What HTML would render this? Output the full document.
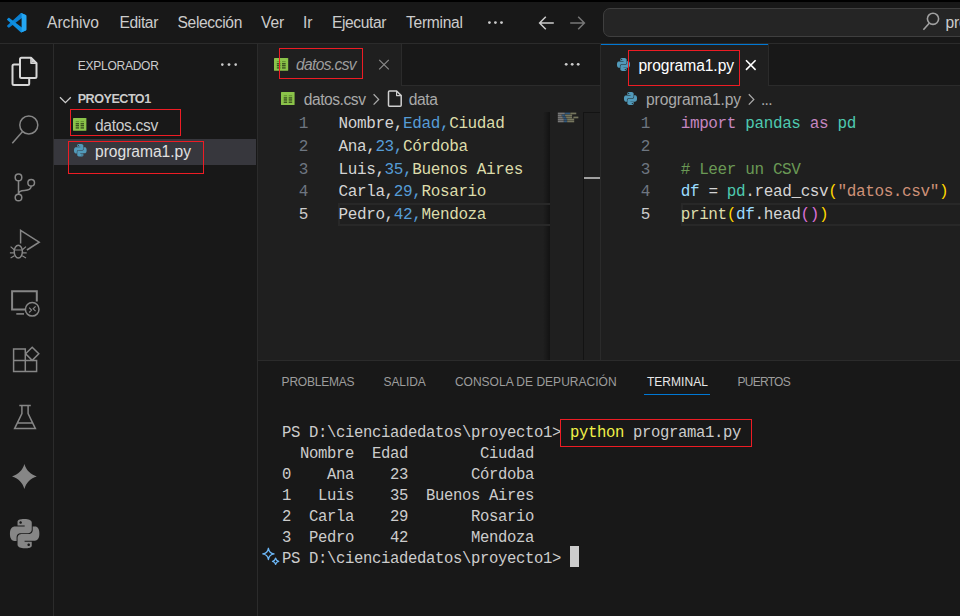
<!DOCTYPE html>
<html lang="es">
<head>
<meta charset="utf-8">
<title>programa1.py - proyecto1 - Visual Studio Code</title>
<style>
html,body{margin:0;padding:0;}
body{width:960px;height:616px;overflow:hidden;background:#181818;position:relative;font-family:"Liberation Sans",sans-serif;color:#ccc;}
.a{position:absolute;}
.t{position:absolute;white-space:pre;line-height:1;}
.m{position:absolute;white-space:pre;font-family:"Liberation Mono",monospace;}
.red{position:absolute;border:1px solid #ed1c24;box-sizing:border-box;}
svg{position:absolute;overflow:visible;}
.code{font-size:16px;letter-spacing:-0.38px;line-height:22.8px;color:#cccccc;}
.term{font-size:15.6px;letter-spacing:-0.36px;line-height:21.05px;color:#cccccc;}
.ln{color:#6e7681;text-align:right;}
.k{color:#c586c0}.c{color:#4ec9b0}.cm{color:#6a9955}.v{color:#9cdcfe}.f{color:#dcdcaa}.s{color:#ce9178}.y{color:#ffd700}.p{color:#da70d6}.n{color:#569cd6}.yy{color:#dcdcaa}.w{color:#d4d4d4}
</style>
</head>
<body>
<!-- top black strip -->
<div class="a" style="left:0;top:0;width:960px;height:2px;background:#000"></div>
<!-- title bar -->
<div class="a" style="left:0;top:2px;width:960px;height:41px;background:#181818;border-bottom:1px solid #2b2b2b"></div>
<!-- search box -->
<div class="a" style="left:603px;top:8px;width:380px;height:29px;box-sizing:border-box;background:#252525;border:1px solid #3f3f3f;border-radius:7px"></div>
<!-- activity bar -->
<div class="a" style="left:0;top:44px;width:53px;height:572px;background:#181818;border-right:1px solid #2b2b2b"></div>
<!-- side bar -->
<div class="a" style="left:54px;top:44px;width:203px;height:572px;background:#181818;border-right:1px solid #2b2b2b"></div>
<div class="a" style="left:54px;top:138.5px;width:202px;height:26.5px;background:#37373d"></div>
<!-- editor area -->
<div class="a" style="left:258px;top:44px;width:702px;height:316px;background:#1f1f1f"></div>
<!-- tab bars -->
<div class="a" style="left:258px;top:44px;width:342px;height:41px;background:#181818;border-bottom:1px solid #2b2b2b"></div>
<div class="a" style="left:258px;top:44px;width:143px;height:42px;background:#1f1f1f;border-right:1px solid #2b2b2b"></div>
<div class="a" style="left:601px;top:44px;width:359px;height:41px;background:#181818;border-bottom:1px solid #2b2b2b"></div>
<div class="a" style="left:601px;top:44px;width:167px;height:42px;background:#1f1f1f;border-right:1px solid #2b2b2b"></div>
<div class="a" style="left:600px;top:44px;width:168px;height:1px;background:#0078d4"></div>
<!-- group separator -->
<div class="a" style="left:600px;top:44px;width:1px;height:316px;background:#2b2b2b"></div>
<!-- minimap / overview ruler editor 1 -->
<div class="a" style="left:543px;top:112px;width:7px;height:248px;background:linear-gradient(to right,rgba(0,0,0,0),rgba(0,0,0,.4))"></div>
<div class="a" style="left:583px;top:112px;width:17px;height:248px;border-left:1px solid #131313;border-top:1px solid #131313;box-sizing:border-box"></div>
<div class="a" style="left:584px;top:177px;width:16px;height:2px;background:#a0a0a0"></div>
<!-- current line highlights -->
<div class="a" style="left:338px;top:203px;width:212px;height:23px;box-sizing:border-box;border:2px solid #282828;border-right:none"></div>
<div class="a" style="left:681px;top:203px;width:290px;height:23px;box-sizing:border-box;border:2px solid #282828"></div>
<!-- panel -->
<div class="a" style="left:258px;top:360px;width:702px;height:256px;background:#181818;border-top:1px solid #2b2b2b;box-sizing:border-box"></div>
<div class="a" style="left:644px;top:394px;width:66px;height:1.3px;background:#0078d4"></div>
<!-- terminal cursor -->
<div class="a" style="left:570px;top:546px;width:9px;height:21px;background:#cccccc"></div>

<span class="t" style="left:47.00px;top:14.79px;font-size:15.6px;color:#cccccc;letter-spacing:0.000px;">Archivo</span>
<span class="t" style="left:119.50px;top:14.79px;font-size:15.6px;color:#cccccc;letter-spacing:-0.375px;">Editar</span>
<span class="t" style="left:177.50px;top:14.79px;font-size:15.6px;color:#cccccc;letter-spacing:-0.347px;">Selección</span>
<span class="t" style="left:261.00px;top:14.79px;font-size:15.6px;color:#cccccc;letter-spacing:-0.135px;">Ver</span>
<span class="t" style="left:303.00px;top:14.79px;font-size:15.6px;color:#cccccc;letter-spacing:-0.016px;">Ir</span>
<span class="t" style="left:332.00px;top:14.79px;font-size:15.6px;color:#cccccc;letter-spacing:-0.402px;">Ejecutar</span>
<span class="t" style="left:406.00px;top:14.79px;font-size:15.6px;color:#cccccc;letter-spacing:-0.280px;">Terminal</span>
<span class="t" style="left:945.60px;top:14.59px;font-size:15.6px;color:#cccccc;letter-spacing:-0.216px;">pro</span>
<span class="t" style="left:77.70px;top:59.54px;font-size:12px;color:#cccccc;letter-spacing:-0.246px;">EXPLORADOR</span>
<span class="t" style="left:77.70px;top:92.93px;font-size:12.6px;color:#cccccc;font-weight:bold;letter-spacing:-0.495px;">PROYECTO1</span>
<span class="t" style="left:95.00px;top:117.59px;font-size:15.6px;color:#cccccc;letter-spacing:-0.319px;">datos.csv</span>
<span class="t" style="left:95.00px;top:143.99px;font-size:15.6px;color:#e0e0e0;letter-spacing:-0.018px;">programa1.py</span>
<span class="t" style="left:296.00px;top:56.54px;font-size:15.6px;color:#9d9d9d;font-style:italic;letter-spacing:-0.653px;">datos.csv</span>
<span class="t" style="left:638.50px;top:57.79px;font-size:15.6px;color:#ffffff;letter-spacing:-0.060px;">programa1.py</span>
<span class="t" style="left:303.75px;top:91.54px;font-size:15.6px;color:#a9a9a9;letter-spacing:-0.458px;">datos.csv</span>
<span class="t" style="left:408.75px;top:91.54px;font-size:15.6px;color:#a9a9a9;letter-spacing:-0.402px;">data</span>
<span class="t" style="left:646.00px;top:91.54px;font-size:15.6px;color:#a9a9a9;letter-spacing:-0.102px;">programa1.py</span>
<span class="t" style="left:761.00px;top:91.54px;font-size:15.6px;color:#a9a9a9;letter-spacing:-0.750px;">...</span>
<span class="t" style="left:281.60px;top:375.54px;font-size:12px;color:#9d9d9d;letter-spacing:-0.211px;">PROBLEMAS</span>
<span class="t" style="left:383.60px;top:375.54px;font-size:12px;color:#9d9d9d;letter-spacing:-0.115px;">SALIDA</span>
<span class="t" style="left:454.90px;top:375.54px;font-size:12px;color:#9d9d9d;letter-spacing:0.015px;">CONSOLA DE DEPURACIÓN</span>
<span class="t" style="left:646.90px;top:375.54px;font-size:12px;color:#e7e7e7;letter-spacing:0.052px;">TERMINAL</span>
<span class="t" style="left:737.50px;top:375.54px;font-size:12px;color:#9d9d9d;letter-spacing:-0.725px;">PUERTOS</span>

<!-- editor 1 code -->
<div class="m code ln" style="left:268px;top:113px;width:40px;">1
2
3
4
<span style="color:#cccccc">5</span></div>
<div class="m code" style="left:338.5px;top:113px;"><span class="w">Nombre,</span><span class="n">Edad,</span><span class="yy">Ciudad</span>
<span class="w">Ana,</span><span class="n">23,</span><span class="yy">Córdoba</span>
<span class="w">Luis,</span><span class="n">35,</span><span class="yy">Buenos Aires</span>
<span class="w">Carla,</span><span class="n">29,</span><span class="yy">Rosario</span>
<span class="w">Pedro,</span><span class="n">42,</span><span class="yy">Mendoza</span></div>
<!-- editor 2 code -->
<div class="m code ln" style="left:610px;top:113px;width:40px;">1
2
3
4
<span style="color:#cccccc">5</span></div>
<div class="m code" style="left:680.7px;top:113px;"><span class="k">import</span> <span class="c">pandas</span> <span class="k">as</span> <span class="c">pd</span>

<span class="cm"># Leer un CSV</span>
<span class="v">df</span> <span class="w">=</span> <span class="c">pd</span><span class="w">.read_csv</span><span class="y">(</span><span class="s">"datos.csv"</span><span class="y">)</span>
<span class="f">print</span><span class="y">(</span><span class="v">df</span><span class="w">.head</span><span class="p">()</span><span class="y">)</span></div>
<!-- terminal -->
<div class="m term" style="left:282px;top:423px;">PS D:\cienciadedatos\proyecto1&gt; <span style="color:#f0f048">python</span> programa1.py
  Nombre  Edad        Ciudad
0    Ana    23       Córdoba
1   Luis    35  Buenos Aires
2  Carla    29       Rosario
3  Pedro    42       Mendoza
PS D:\cienciadedatos\proyecto1&gt; </div>

<!-- VS Code logo -->
<svg style="left:6.8px;top:12.8px" width="19.5" height="19.5" viewBox="0 0 100 100">
<path fill="#0a7fd0" d="M96.4614 10.7962L75.8569 0.875542C73.4719 -0.272773 70.6217 0.211611 68.75 2.08333L1.29858 63.5832C-0.515693 65.2373 -0.513607 68.0937 1.30308 69.7452L6.81272 74.7538C8.29793 76.1041 10.5347 76.2035 12.1338 74.9905L93.3609 13.3699C96.086 11.3026 100 13.2462 100 16.6667V16.4275C100 14.0265 98.6246 11.8378 96.4614 10.7962Z"/>
<path fill="#0e8ee0" d="M96.4614 89.2038L75.8569 99.1245C73.4719 100.273 70.6217 99.7884 68.75 97.9167L1.29858 36.4169C-0.515693 34.7627 -0.513607 31.9063 1.30308 30.2548L6.81272 25.2462C8.29793 23.8959 10.5347 23.7965 12.1338 25.0095L93.3609 86.6301C96.086 88.6974 100 86.7538 100 83.3334V83.5726C100 85.9735 98.6246 88.1622 96.4614 89.2038Z"/>
<path fill="#24a6f2" d="M75.8578 99.1263C73.4721 100.274 70.6219 99.7885 68.75 97.9166C71.0564 100.223 75 98.5895 75 95.3278V4.67213C75 1.41039 71.0564 -0.223106 68.75 2.08329C70.6219 0.211402 73.4721 -0.273666 75.8578 0.873633L96.4587 10.7807C98.6234 11.8217 100 14.0112 100 16.4132V83.5871C100 85.9891 98.6234 88.1786 96.4586 89.2196L75.8578 99.1263Z"/>
</svg>
<!-- title bar: dots and arrows, search icon -->
<svg style="left:0;top:0" width="960" height="44" viewBox="0 0 960 44">
<g fill="#cccccc"><circle cx="489.4" cy="22.6" r="1.4"/><circle cx="495.4" cy="22.6" r="1.4"/><circle cx="501.5" cy="22.6" r="1.4"/></g>
<path d="M553.8 23H539.8M545.8 16.8L539.6 23L545.8 29.2" fill="none" stroke="#cccccc" stroke-width="1.5"/>
<path d="M570.2 23H584.2M578.2 16.8L584.4 23L578.2 29.2" fill="none" stroke="#777777" stroke-width="1.5"/>
<g fill="none" stroke="#a0a0a0" stroke-width="1.6"><circle cx="933" cy="18.8" r="5.6"/><path d="M929.2 23.2L923.4 29.8"/></g>
</svg>
<!-- activity bar icons -->
<svg style="left:0;top:44px" width="54" height="572" viewBox="0 44 54 572">
<!-- files (active) -->
<g fill="none" stroke="#d7d7d7" stroke-width="2" stroke-linejoin="round">
<path d="M21.5 57.7H31L36.5 63.2V76.5Q36.5 78 35 78H21.5Q20 78 20 76.5V59.2Q20 57.7 21.5 57.7Z"/>
<path d="M31 57.7V63.2H36.5" stroke-width="1.6"/>
<path d="M20 64.5H14Q12.5 64.5 12.5 66V83.5Q12.5 85 14 85H27.7Q29.2 85 29.2 83.5V78"/>
</g>
<path d="M31.6 59.3L34.9 62.6H31.6Z" fill="#d7d7d7"/>
<g fill="none" stroke="#868686" stroke-width="1.5">
<!-- search -->
<circle cx="28.8" cy="125" r="9"/><path d="M22.6 131.6L12.3 143.2"/>
<!-- scm -->
<circle cx="18.5" cy="177.4" r="3.3"/><circle cx="18.5" cy="197.5" r="3.3"/><circle cx="31.2" cy="182.8" r="3.3"/>
<path d="M18.5 180.7V194.2M31.2 186.1C31.2 189.6 28 190.4 24.5 190.4C21 190.4 18.5 191.4 18.5 194.2"/>
<!-- debug -->
<path d="M20.6 243.5V230.4L39.2 242.2L26.9 250"/>
<ellipse cx="18.3" cy="251.6" rx="4.1" ry="6.3"/>
<path d="M14.4 250H22.2M14.2 249.8L10.6 246.6M13.9 252.8H9.9M14.4 255.8L10.6 258M22.4 249.8L26 246.6M22.7 252.8H26.7M22.2 255.8L26 258" stroke-width="1.2"/>
<!-- remote -->
<path d="M25.2 309.6H12.1V291.2H36.8V301.4" stroke-width="2"/>
<path d="M16.3 313.9H24" stroke-width="1.6"/>
<circle cx="32.2" cy="309.3" r="6.8"/>
<path d="M29.2 307.7L31.5 310.1L29.2 312.5M35.6 306.4L33.2 308.8L35.6 311.2" stroke-width="1.2"/>
<!-- extensions -->
<path d="M13.6 349H25.3V360.6H36.6V371.5H13.6ZM13.6 360.6H25.3V371.5M32.2 347.2L38.8 353.8L32.2 360.4L25.6 353.8Z"/>
<!-- flask -->
<path d="M19.3 405.6H30.8M21.9 405.6V413.6L14.6 428.6H35.4L28.1 413.6V405.6M17.6 423H32.4"/>
</g>
<!-- sparkle -->
<path d="M24.4 464.1C26.2 470.3 30.599999999999998 474.7 36.8 476.5C30.599999999999998 478.3 26.2 482.7 24.4 488.9C22.599999999999998 482.7 18.2 478.3 11.999999999999998 476.5C18.2 474.7 22.599999999999998 470.3 24.4 464.1Z" fill="#868686"/>
</svg>
<!-- python icons -->
<svg style="left:9.7px;top:519px" width="29.3" height="29.3" viewBox="0 0 24 24"><path fill="#868686" d="M14.25.18l.9.2.73.26.59.3.45.32.34.34.25.34.16.33.1.3.04.26.02.2-.01.13V8.5l-.05.63-.13.55-.21.46-.26.38-.3.31-.33.25-.35.19-.35.14-.33.1-.3.07-.26.04-.21.02H8.77l-.69.05-.59.14-.5.22-.41.27-.33.32-.27.35-.2.36-.15.37-.1.35-.07.32-.04.27-.02.21v3.06H3.17l-.21-.03-.28-.07-.32-.12-.35-.18-.36-.26-.36-.36-.35-.46-.32-.59-.28-.73-.21-.88-.14-1.05-.05-1.23.06-1.22.16-1.04.24-.87.32-.71.36-.57.4-.44.42-.33.42-.24.4-.16.36-.1.32-.05.24-.01h.16l.06.01h8.16v-.83H6.18l-.01-2.75-.02-.37.05-.34.11-.31.17-.28.25-.26.31-.23.38-.2.44-.18.51-.15.58-.12.64-.1.71-.06.77-.04.84-.02 1.27.05zm-6.3 1.98l-.23.33-.08.41.08.41.23.34.33.22.41.09.41-.09.33-.22.23-.34.08-.41-.08-.41-.23-.33-.33-.22-.41-.09-.41.09zm13.09 3.95l.28.06.32.12.35.18.36.27.36.35.35.47.32.59.28.73.21.88.14 1.04.05 1.23-.06 1.23-.16 1.04-.24.86-.32.71-.36.57-.4.45-.42.33-.42.24-.4.16-.36.09-.32.05-.24.02-.16-.01h-8.22v.82h5.84l.01 2.76.02.36-.05.34-.11.31-.17.29-.25.25-.31.24-.38.2-.44.17-.51.15-.58.13-.64.09-.71.07-.77.04-.84.01-1.27-.04-1.07-.14-.9-.2-.73-.25-.59-.3-.45-.33-.34-.34-.25-.34-.16-.33-.1-.3-.04-.25-.02-.2.01-.13v-5.34l.05-.64.13-.54.21-.46.26-.38.3-.32.33-.24.35-.2.35-.14.33-.1.3-.06.26-.04.21-.02.13-.01h5.84l.69-.05.59-.14.5-.21.41-.28.33-.32.27-.35.2-.36.15-.36.1-.35.07-.32.04-.28.02-.21V6.07h2.09l.14.01zm-6.47 14.25l-.23.33-.08.41.08.41.23.33.33.23.41.08.41-.08.33-.23.23-.33.08-.41-.08-.41-.23-.33-.33-.23-.41-.08-.41.08z"/></svg>
<svg style="left:74.0px;top:143.8px" width="12.6" height="12.6" viewBox="0 0 24 24"><path fill="#519aba" d="M14.25.18l.9.2.73.26.59.3.45.32.34.34.25.34.16.33.1.3.04.26.02.2-.01.13V8.5l-.05.63-.13.55-.21.46-.26.38-.3.31-.33.25-.35.19-.35.14-.33.1-.3.07-.26.04-.21.02H8.77l-.69.05-.59.14-.5.22-.41.27-.33.32-.27.35-.2.36-.15.37-.1.35-.07.32-.04.27-.02.21v3.06H3.17l-.21-.03-.28-.07-.32-.12-.35-.18-.36-.26-.36-.36-.35-.46-.32-.59-.28-.73-.21-.88-.14-1.05-.05-1.23.06-1.22.16-1.04.24-.87.32-.71.36-.57.4-.44.42-.33.42-.24.4-.16.36-.1.32-.05.24-.01h.16l.06.01h8.16v-.83H6.18l-.01-2.75-.02-.37.05-.34.11-.31.17-.28.25-.26.31-.23.38-.2.44-.18.51-.15.58-.12.64-.1.71-.06.77-.04.84-.02 1.27.05zm-6.3 1.98l-.23.33-.08.41.08.41.23.34.33.22.41.09.41-.09.33-.22.23-.34.08-.41-.08-.41-.23-.33-.33-.22-.41-.09-.41.09zm13.09 3.95l.28.06.32.12.35.18.36.27.36.35.35.47.32.59.28.73.21.88.14 1.04.05 1.23-.06 1.23-.16 1.04-.24.86-.32.71-.36.57-.4.45-.42.33-.42.24-.4.16-.36.09-.32.05-.24.02-.16-.01h-8.22v.82h5.84l.01 2.76.02.36-.05.34-.11.31-.17.29-.25.25-.31.24-.38.2-.44.17-.51.15-.58.13-.64.09-.71.07-.77.04-.84.01-1.27-.04-1.07-.14-.9-.2-.73-.25-.59-.3-.45-.33-.34-.34-.25-.34-.16-.33-.1-.3-.04-.25-.02-.2.01-.13v-5.34l.05-.64.13-.54.21-.46.26-.38.3-.32.33-.24.35-.2.35-.14.33-.1.3-.06.26-.04.21-.02.13-.01h5.84l.69-.05.59-.14.5-.21.41-.28.33-.32.27-.35.2-.36.15-.36.1-.35.07-.32.04-.28.02-.21V6.07h2.09l.14.01zm-6.47 14.25l-.23.33-.08.41.08.41.23.33.33.23.41.08.41-.08.33-.23.23-.33.08-.41-.08-.41-.23-.33-.33-.23-.41-.08-.41.08z"/></svg>
<svg style="left:616.7px;top:57.9px" width="13" height="13" viewBox="0 0 24 24"><path fill="#519aba" d="M14.25.18l.9.2.73.26.59.3.45.32.34.34.25.34.16.33.1.3.04.26.02.2-.01.13V8.5l-.05.63-.13.55-.21.46-.26.38-.3.31-.33.25-.35.19-.35.14-.33.1-.3.07-.26.04-.21.02H8.77l-.69.05-.59.14-.5.22-.41.27-.33.32-.27.35-.2.36-.15.37-.1.35-.07.32-.04.27-.02.21v3.06H3.17l-.21-.03-.28-.07-.32-.12-.35-.18-.36-.26-.36-.36-.35-.46-.32-.59-.28-.73-.21-.88-.14-1.05-.05-1.23.06-1.22.16-1.04.24-.87.32-.71.36-.57.4-.44.42-.33.42-.24.4-.16.36-.1.32-.05.24-.01h.16l.06.01h8.16v-.83H6.18l-.01-2.75-.02-.37.05-.34.11-.31.17-.28.25-.26.31-.23.38-.2.44-.18.51-.15.58-.12.64-.1.71-.06.77-.04.84-.02 1.27.05zm-6.3 1.98l-.23.33-.08.41.08.41.23.34.33.22.41.09.41-.09.33-.22.23-.34.08-.41-.08-.41-.23-.33-.33-.22-.41-.09-.41.09zm13.09 3.95l.28.06.32.12.35.18.36.27.36.35.35.47.32.59.28.73.21.88.14 1.04.05 1.23-.06 1.23-.16 1.04-.24.86-.32.71-.36.57-.4.45-.42.33-.42.24-.4.16-.36.09-.32.05-.24.02-.16-.01h-8.22v.82h5.84l.01 2.76.02.36-.05.34-.11.31-.17.29-.25.25-.31.24-.38.2-.44.17-.51.15-.58.13-.64.09-.71.07-.77.04-.84.01-1.27-.04-1.07-.14-.9-.2-.73-.25-.59-.3-.45-.33-.34-.34-.25-.34-.16-.33-.1-.3-.04-.25-.02-.2.01-.13v-5.34l.05-.64.13-.54.21-.46.26-.38.3-.32.33-.24.35-.2.35-.14.33-.1.3-.06.26-.04.21-.02.13-.01h5.84l.69-.05.59-.14.5-.21.41-.28.33-.32.27-.35.2-.36.15-.36.1-.35.07-.32.04-.28.02-.21V6.07h2.09l.14.01zm-6.47 14.25l-.23.33-.08.41.08.41.23.33.33.23.41.08.41-.08.33-.23.23-.33.08-.41-.08-.41-.23-.33-.33-.23-.41-.08-.41.08z"/></svg>
<svg style="left:624px;top:92px" width="13" height="13" viewBox="0 0 24 24"><path fill="#519aba" d="M14.25.18l.9.2.73.26.59.3.45.32.34.34.25.34.16.33.1.3.04.26.02.2-.01.13V8.5l-.05.63-.13.55-.21.46-.26.38-.3.31-.33.25-.35.19-.35.14-.33.1-.3.07-.26.04-.21.02H8.77l-.69.05-.59.14-.5.22-.41.27-.33.32-.27.35-.2.36-.15.37-.1.35-.07.32-.04.27-.02.21v3.06H3.17l-.21-.03-.28-.07-.32-.12-.35-.18-.36-.26-.36-.36-.35-.46-.32-.59-.28-.73-.21-.88-.14-1.05-.05-1.23.06-1.22.16-1.04.24-.87.32-.71.36-.57.4-.44.42-.33.42-.24.4-.16.36-.1.32-.05.24-.01h.16l.06.01h8.16v-.83H6.18l-.01-2.75-.02-.37.05-.34.11-.31.17-.28.25-.26.31-.23.38-.2.44-.18.51-.15.58-.12.64-.1.71-.06.77-.04.84-.02 1.27.05zm-6.3 1.98l-.23.33-.08.41.08.41.23.34.33.22.41.09.41-.09.33-.22.23-.34.08-.41-.08-.41-.23-.33-.33-.22-.41-.09-.41.09zm13.09 3.95l.28.06.32.12.35.18.36.27.36.35.35.47.32.59.28.73.21.88.14 1.04.05 1.23-.06 1.23-.16 1.04-.24.86-.32.71-.36.57-.4.45-.42.33-.42.24-.4.16-.36.09-.32.05-.24.02-.16-.01h-8.22v.82h5.84l.01 2.76.02.36-.05.34-.11.31-.17.29-.25.25-.31.24-.38.2-.44.17-.51.15-.58.13-.64.09-.71.07-.77.04-.84.01-1.27-.04-1.07-.14-.9-.2-.73-.25-.59-.3-.45-.33-.34-.34-.25-.34-.16-.33-.1-.3-.04-.25-.02-.2.01-.13v-5.34l.05-.64.13-.54.21-.46.26-.38.3-.32.33-.24.35-.2.35-.14.33-.1.3-.06.26-.04.21-.02.13-.01h5.84l.69-.05.59-.14.5-.21.41-.28.33-.32.27-.35.2-.36.15-.36.1-.35.07-.32.04-.28.02-.21V6.07h2.09l.14.01zm-6.47 14.25l-.23.33-.08.41.08.41.23.33.33.23.41.08.41-.08.33-.23.23-.33.08-.41-.08-.41-.23-.33-.33-.23-.41-.08-.41.08z"/></svg>
<!-- csv icons -->
<svg style="left:73.3px;top:117.7px" width="13.4" height="12.8" viewBox="0 0 14 13" preserveAspectRatio="none"><rect x="0" y="0" width="14" height="13" rx="0.6" fill="#8bc34a"/><rect x="2.8" y="3.2" width="3.5" height="1" fill="#5f8f2e"/><rect x="7.9" y="3.2" width="3.6" height="1" fill="#5f8f2e"/><rect x="2.8" y="5.4" width="3.5" height="1" fill="#1c2710"/><rect x="7.9" y="5.4" width="3.6" height="1" fill="#1c2710"/><rect x="2.8" y="7.4" width="3.5" height="1" fill="#1c2710"/><rect x="7.9" y="7.4" width="3.6" height="1" fill="#1c2710"/><rect x="2.8" y="9.6" width="3.5" height="1" fill="#1c2710"/><rect x="7.9" y="9.6" width="3.6" height="1" fill="#1c2710"/></svg>
<svg style="left:274px;top:58px" width="14.2" height="12.8" viewBox="0 0 14 13" preserveAspectRatio="none"><rect x="0" y="0" width="14" height="13" rx="0.6" fill="#8bc34a"/><rect x="2.8" y="3.2" width="3.5" height="1" fill="#5f8f2e"/><rect x="7.9" y="3.2" width="3.6" height="1" fill="#5f8f2e"/><rect x="2.8" y="5.4" width="3.5" height="1" fill="#1c2710"/><rect x="7.9" y="5.4" width="3.6" height="1" fill="#1c2710"/><rect x="2.8" y="7.4" width="3.5" height="1" fill="#1c2710"/><rect x="7.9" y="7.4" width="3.6" height="1" fill="#1c2710"/><rect x="2.8" y="9.6" width="3.5" height="1" fill="#1c2710"/><rect x="7.9" y="9.6" width="3.6" height="1" fill="#1c2710"/></svg>
<svg style="left:281.4px;top:91.8px" width="13.6" height="13.1" viewBox="0 0 14 13" preserveAspectRatio="none"><rect x="0" y="0" width="14" height="13" rx="0.6" fill="#8bc34a"/><rect x="2.8" y="3.2" width="3.5" height="1" fill="#5f8f2e"/><rect x="7.9" y="3.2" width="3.6" height="1" fill="#5f8f2e"/><rect x="2.8" y="5.4" width="3.5" height="1" fill="#1c2710"/><rect x="7.9" y="5.4" width="3.6" height="1" fill="#1c2710"/><rect x="2.8" y="7.4" width="3.5" height="1" fill="#1c2710"/><rect x="7.9" y="7.4" width="3.6" height="1" fill="#1c2710"/><rect x="2.8" y="9.6" width="3.5" height="1" fill="#1c2710"/><rect x="7.9" y="9.6" width="3.6" height="1" fill="#1c2710"/></svg>
<!-- misc small icons -->
<svg style="left:0;top:0" width="960" height="616" viewBox="0 0 960 616">
<g fill="#cccccc"><circle cx="222.3" cy="64.6" r="1.3"/><circle cx="229" cy="64.6" r="1.4"/><circle cx="235.7" cy="64.6" r="1.3"/></g>
<g fill="#cccccc"><circle cx="566.2" cy="64.3" r="1.4"/><circle cx="572.2" cy="64.3" r="1.4"/><circle cx="578.2" cy="64.3" r="1.4"/></g>
<path d="M60 97.2L65.4 102.6L70.8 97.2" fill="none" stroke="#cccccc" stroke-width="1.3"/>
<path d="M379.2 59.8L388.8 69.4M388.8 59.8L379.2 69.4" fill="none" stroke="#8a8a8a" stroke-width="1.2"/>
<path d="M746 60.3L755.6 69.9M755.6 60.3L746 69.9" fill="none" stroke="#ffffff" stroke-width="1.6"/>
<path d="M373.6 94.2L378.6 99.4L373.6 104.6" fill="none" stroke="#a9a9a9" stroke-width="1.3"/>
<path d="M748.8 94.2L753.8 99.4L748.8 104.6" fill="none" stroke="#a9a9a9" stroke-width="1.3"/>
<g fill="none" stroke="#d0d0d0" stroke-width="1.5" stroke-linejoin="round"><path d="M389.5 91H396.6L401.2 95.6V105.2Q401.2 106.2 400.2 106.2H389.5Q388.5 106.2 388.5 105.2V92Q388.5 91 389.5 91Z"/><path d="M396.6 91V95.6H401.2" stroke-width="1.2"/></g>
<!-- terminal sparkle -->
<g fill="none" stroke="#6cb6f5" stroke-width="1.35" stroke-linejoin="round">
<path d="M268.4 548.30C269.00 551.90 270.40 553.30 274.00 553.9C270.40 554.50 269.00 555.90 268.4 559.50C267.80 555.90 266.40 554.50 262.80 553.9C266.40 553.30 267.80 551.90 268.4 548.30Z"/>
<path d="M275.6 558.20C276.00 560.10 276.80 560.90 278.70 561.3C276.80 561.70 276.00 562.50 275.6 564.40C275.20 562.50 274.40 561.70 272.50 561.3C274.40 560.90 275.20 560.10 275.6 558.20Z"/>
</g>
</svg>
<!-- minimap -->
<svg style="left:0;top:0" width="960" height="616" viewBox="0 0 960 616" >
<rect x="557.80" y="112.6" width="7.03" height="1.7" fill="#b4b4b4" opacity="0.6"/><rect x="565.08" y="112.6" width="4.95" height="1.7" fill="#3f7fba" opacity="0.6"/><rect x="570.28" y="112.6" width="5.99" height="1.7" fill="#b0b089" opacity="0.6"/>
<rect x="557.80" y="114.6" width="3.91" height="1.7" fill="#b4b4b4" opacity="0.6"/><rect x="561.96" y="114.6" width="2.87" height="1.7" fill="#3f7fba" opacity="0.6"/><rect x="565.08" y="114.6" width="7.03" height="1.7" fill="#b0b089" opacity="0.6"/>
<rect x="557.80" y="116.6" width="4.95" height="1.7" fill="#b4b4b4" opacity="0.6"/><rect x="563.00" y="116.6" width="2.87" height="1.7" fill="#3f7fba" opacity="0.6"/><rect x="566.12" y="116.6" width="5.99" height="1.7" fill="#b0b089" opacity="0.6"/><rect x="573.40" y="116.6" width="4.95" height="1.7" fill="#b0b089" opacity="0.6"/>
<rect x="557.80" y="118.6" width="5.99" height="1.7" fill="#b4b4b4" opacity="0.6"/><rect x="564.04" y="118.6" width="2.87" height="1.7" fill="#3f7fba" opacity="0.6"/><rect x="567.16" y="118.6" width="7.03" height="1.7" fill="#b0b089" opacity="0.6"/>
<rect x="557.80" y="120.6" width="5.99" height="1.7" fill="#b4b4b4" opacity="0.6"/><rect x="564.04" y="120.6" width="2.87" height="1.7" fill="#3f7fba" opacity="0.6"/><rect x="567.16" y="120.6" width="7.03" height="1.7" fill="#b0b089" opacity="0.6"/>
</svg>

<!-- red annotation rectangles -->
<div class="red" style="left:70px;top:109px;width:111px;height:27px"></div>
<div class="red" style="left:68px;top:141px;width:136px;height:33px"></div>
<div class="red" style="left:279px;top:48px;width:84px;height:31px"></div>
<div class="red" style="left:628px;top:50px;width:112px;height:36px"></div>
<div class="red" style="left:560px;top:419px;width:192px;height:28px"></div>


</body>
</html>
